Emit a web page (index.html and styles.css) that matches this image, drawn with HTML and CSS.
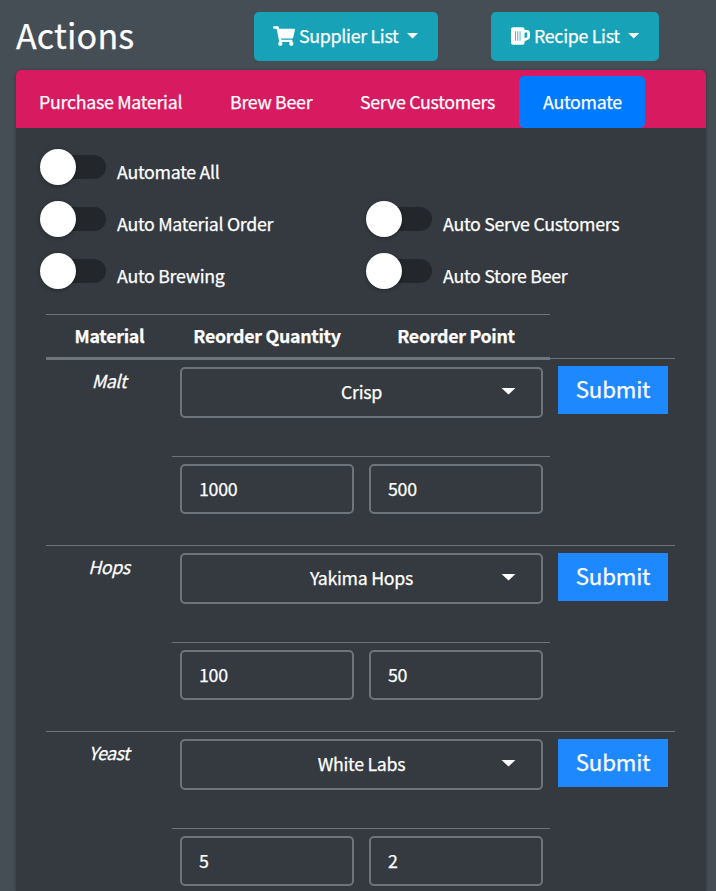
FILE: index.html
```html
<!DOCTYPE html>
<html lang="en">
<head>
<meta charset="utf-8">
<title>Actions</title>
<link rel="stylesheet" href="styles.css">
</head>
<body>
<header class="top">
  <h1 class="title"><span>Actions</span></h1>
  <button class="btn-list supplier">
    <svg class="cart" viewBox="0 0 576 512"><path fill="currentColor" d="M528.12 301.319l47.273-208C578.806 78.301 567.391 64 551.99 64H159.208l-9.166-44.81C147.758 8.021 137.93 0 126.529 0H24C10.745 0 0 10.745 0 24v16c0 13.255 10.745 24 24 24h69.883l70.248 343.435C147.325 417.1 136 435.222 136 456c0 30.928 25.072 56 56 56s56-25.072 56-56c0-15.674-6.447-29.835-16.824-40h209.647C430.447 426.165 424 440.326 424 456c0 30.928 25.072 56 56 56s56-25.072 56-56c0-22.172-12.888-41.332-31.579-50.405l5.517-24.276c3.413-15.018-8.002-29.319-23.403-29.319H218.117l-6.545-32h293.145c11.206 0 20.92-7.754 23.403-18.681z"/></svg>
    <span class="txt">Supplier List</span><i class="caret"></i>
  </button>
  <button class="btn-list recipe">
    <svg class="beer" viewBox="0 0 448 416"><path fill="currentColor" fill-rule="evenodd" d="M48 0H272Q320 0 320 48V64H368Q448 64 448 144V230Q448 270 410 290L320 330V368Q320 416 272 416H48Q0 416 0 368V48Q0 0 48 0ZM320 128V260L372 237Q384 231 384 218V144Q384 128 368 128ZM98 96V320H116V96ZM151 96V320H169V96ZM204 96V320H222V96Z"/></svg>
    <span class="txt">Recipe List</span><i class="caret"></i>
  </button>
</header>
<main class="card">
  <nav class="tabs">
    <a class="tab t1"><span class="txt">Purchase Material</span></a>
    <a class="tab t2"><span class="txt">Brew Beer</span></a>
    <a class="tab t3"><span class="txt">Serve Customers</span></a>
    <a class="tab t4 active"><span class="txt">Automate</span></a>
  </nav>
  <section class="switches">
    <label class="switch wide"><i class="track"></i><span class="txt">Automate All</span></label>
    <label class="switch"><i class="track"></i><span class="txt">Auto Material Order</span></label>
    <label class="switch"><i class="track"></i><span class="txt">Auto Serve Customers</span></label>
    <label class="switch"><i class="track"></i><span class="txt">Auto Brewing</span></label>
    <label class="switch"><i class="track"></i><span class="txt">Auto Store Beer</span></label>
  </section>
  <section class="table">
    <div class="head"><b>Material</b><b>Reorder Quantity</b><b>Reorder Point</b></div>
    <div class="row first">
      <em class="name">Malt</em>
      <div class="pick"><div class="select"><span>Crisp</span><i class="caret"></i></div></div>
      <div class="side"><button class="submit">Submit</button></div>
      <div class="fields"><div class="input">1000</div><div class="input">500</div></div>
    </div>
    <div class="row">
      <em class="name">Hops</em>
      <div class="pick"><div class="select"><span>Yakima Hops</span><i class="caret"></i></div></div>
      <div class="side"><button class="submit">Submit</button></div>
      <div class="fields"><div class="input">100</div><div class="input">50</div></div>
    </div>
    <div class="row">
      <em class="name">Yeast</em>
      <div class="pick"><div class="select"><span>White Labs</span><i class="caret"></i></div></div>
      <div class="side"><button class="submit">Submit</button></div>
      <div class="fields"><div class="input">5</div><div class="input">2</div></div>
    </div>
  </section>
</main>
</body>
</html>
```
FILE: styles.css
```css
* { box-sizing: border-box; }
html { height: 891px; overflow: hidden; }
body {
  margin: 0;
  height: 891px;
  overflow: hidden;
  background: #454d55;
  color: #fff;
  font: 17.8px/30px "Noto Sans CJK SC", "Open Sans", sans-serif;
  letter-spacing: -.29px;
  -webkit-text-stroke: .25px currentColor;
  white-space: nowrap;
}
button { font: inherit; color: inherit; letter-spacing: inherit; border: 0; padding: 0; }
.top { display: flex; height: 70px; padding: 12px 0 0 16px; }
.title {
  margin: 0;
  width: 238px;
  font-size: 34px;
  font-weight: 400;
  letter-spacing: .2px;
  line-height: 46px;
}
.btn-list {
  display: flex;
  align-items: center;
  height: 49px;
  border-radius: 5px;
  background: #17a2b8;
}
.btn-list .txt { margin-top: -3px; }
.supplier { width: 184px; margin-right: 53px; padding-left: 19px; }
.recipe { width: 168px; padding-left: 20px; }
.cart { width: 22px; height: 20px; margin: 0 4px 2px 0; }
.beer { width: 19px; height: 18px; margin: 0 4px 2px 0; }
.caret {
  width: 12px;
  height: 6px;
  background: #fff;
  clip-path: polygon(0 0, 100% 0, 50% 100%);
}
.btn-list .caret { margin: -2px 0 0 8px; }
.card {
  width: 690px;
  height: 821px;
  margin-left: 16px;
  overflow: hidden;
  border-radius: 5px 5px 0 0;
  background: #343a40;
  box-shadow: 0 0 2px rgba(0, 0, 0, .13), 0 1px 4px rgba(0, 0, 0, .2);
}
.tabs { display: flex; height: 58px; padding-top: 6px; background: #d81b60; }
.tab { height: 52px; padding-left: 23px; line-height: 50px; border-radius: 5px; }
.t1 { width: 191px; }
.t2 { width: 130px; }
.t3 { width: 182px; }
.t4 { width: 126px; padding-left: 24px; }
.active { background: #007bff; }
.switches {
  display: grid;
  grid-template-columns: 326px 326px;
  grid-auto-rows: 52px;
  padding: 13px 0 0 24px;
}
.wide { grid-column: 1 / 3; }
.switch { display: flex; padding-top: 8px; }
.track {
  width: 66px;
  height: 24px;
  margin: 6px 11px 0 0;
  border-radius: 12px;
  background: #23272b;
}
.track::before {
  content: "";
  display: block;
  width: 36px;
  height: 36px;
  margin-top: -6px;
  border-radius: 50%;
  background: #fff;
  box-shadow: 0 1px 4px rgba(0, 0, 0, .35);
}
.switch .txt { padding-top: 7px; }
.table { margin: 17px 0 0 30px; width: 629px; }
.head {
  display: grid;
  grid-template-columns: 126px 189px 189px;
  width: 504px;
  height: 46px;
  border-top: 1px solid #6c757d;
  border-bottom: 3px solid #6c757d;
  text-align: center;
  line-height: 41px;
}
.head b { padding-left: 1px; }
.row {
  display: grid;
  grid-template: 96px 89px / 126px 378px 125px;
  height: 186px;
  border-top: 1px solid #6c757d;
}
.row.first {
  height: 187px;
  margin-top: -2px;
  grid-template-rows: 97px 89px;
}
.name { grid-row: 1 / 3; padding-top: 5px; text-align: center; letter-spacing: -.45px; }
.first .name { padding-top: 6px; }
.pick { padding: 7px 7px 0 8px; }
.first .pick { padding-top: 8px; }
.select {
  display: flex;
  align-items: center;
  height: 51px;
  border: 2px solid #6c757d;
  border-radius: 5px;
}
.select span { flex: 1; margin-top: -4px; text-align: center; }
.select .caret { width: 15px; height: 7px; margin: -3px 25px 0 -40px; }
.side { padding: 7px 0 0 8px; }
.submit {
  width: 110px;
  height: 48px;
  padding-bottom: 4px;
  background: #1e88ff;
  font-size: 22.3px;
  letter-spacing: -.2px;
  line-height: 44px;
}
.fields {
  grid-column: 2;
  display: grid;
  grid-template-columns: 174px 174px;
  gap: 15px;
  padding: 7px 8px;
  border-top: 1px solid #6c757d;
}
.input {
  height: 50px;
  padding-left: 17px;
  border: 2px solid #6c757d;
  border-radius: 5px;
  line-height: 44px;
  letter-spacing: -.25px;
}
```
